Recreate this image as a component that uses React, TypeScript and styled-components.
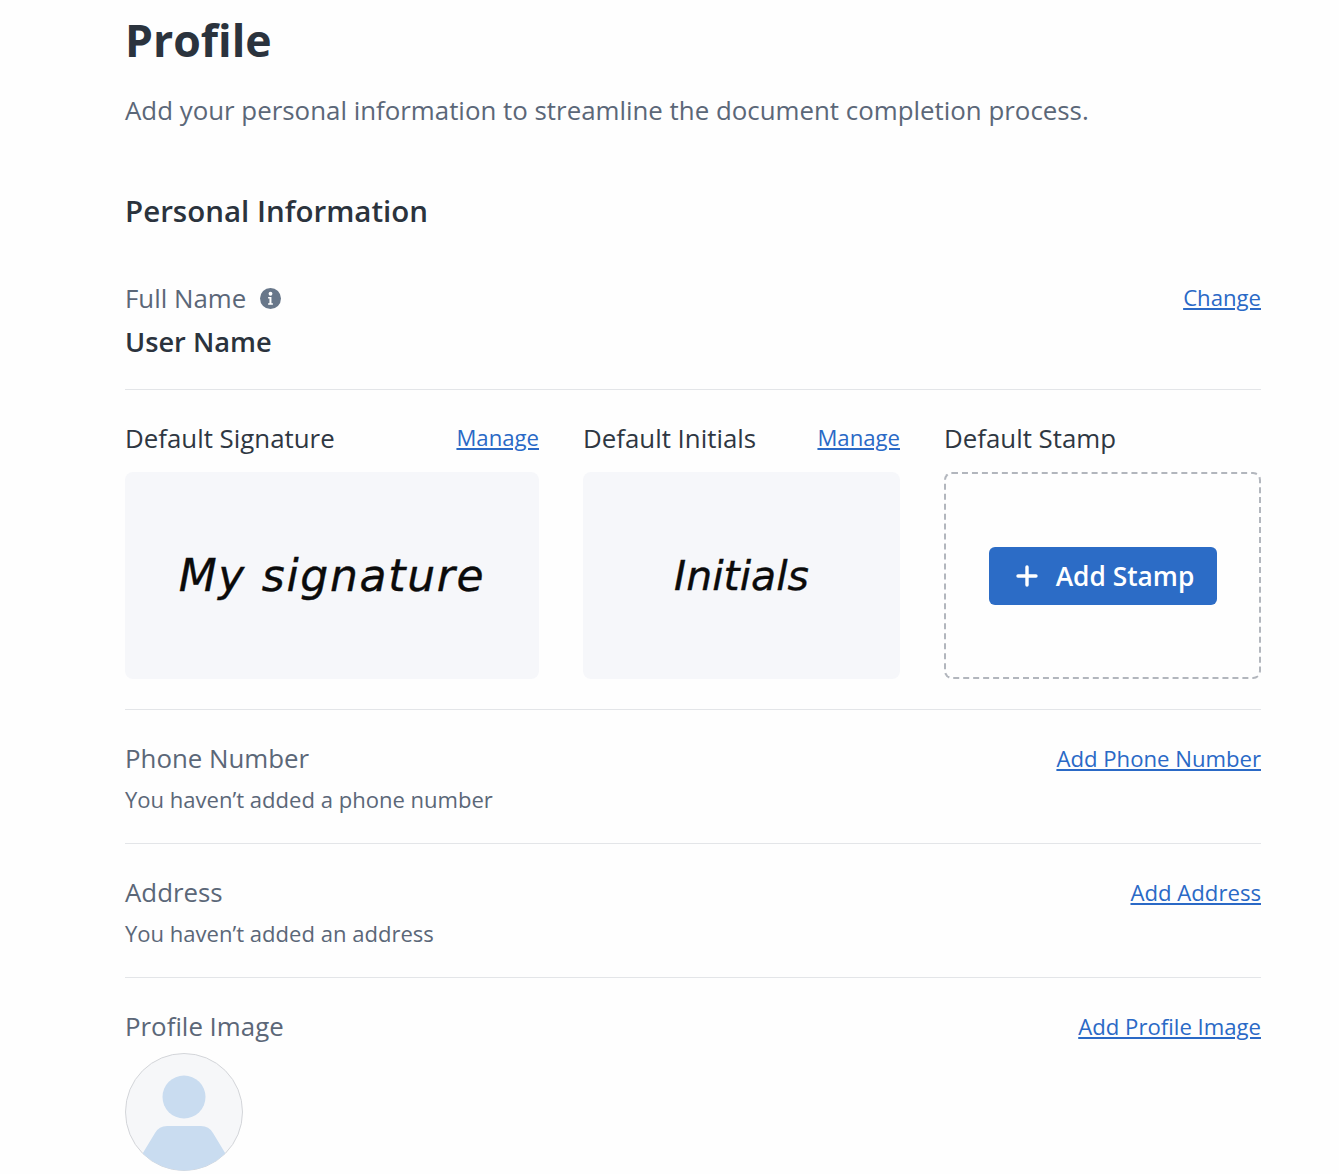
import React from "react";
import styled, { createGlobalStyle } from "styled-components";

const Global = createGlobalStyle`
  html, body { margin: 0; padding: 0; background: #fefefe; }
  body { font-family: "Open Sans", "Noto Sans", sans-serif; height: 1174px; overflow: hidden; }
`;
const Page = styled.main`
  width: 1136px;
  margin-left: 125px;
  padding-top: 12px;
  display: flex;
  flex-direction: column;
`;
const Title = styled.h1`
  margin: 0;
  font-size: 44.6px;
  line-height: 56px;
  font-weight: 700;
  color: #2b333d;
`;
const Subtitle = styled.p`
  margin: 24px 0 0;
  font-size: 25.87px;
  line-height: 36px;
  color: #5b6778;
`;
const SectionTitle = styled.h2`
  margin: 63px 0 0;
  font-size: 29.5px;
  line-height: 40px;
  font-weight: 600;
  color: #2b333d;
`;
const Row = styled.section<{ $height?: number; $pad?: number; $last?: boolean }>`
  display: flex;
  justify-content: space-between;
  align-items: flex-start;
  box-sizing: border-box;
  height: ${(p) => (p.$height ? `${p.$height}px` : "auto")};
  padding-top: ${(p) => p.$pad ?? 0}px;
  border-bottom: ${(p) => (p.$last ? "0" : "1px solid #e3e5e8")};
`;
const NameRow = styled(Row)`
  margin-top: 49px;
`;
const Label = styled.div`
  display: flex;
  align-items: center;
  gap: 14px;
  font-size: 25.85px;
  line-height: 36px;
  color: #5b6778;
`;
const Value = styled.div`
  margin-top: 8px;
  font-size: 27.2px;
  line-height: 36px;
  font-weight: 600;
  color: #2b333d;
`;
const Note = styled.div`
  margin-top: 7px;
  font-size: 22.05px;
  line-height: 32px;
  color: #5b6778;
`;
const TextLink = styled.a`
  font-size: 22.15px;
  line-height: 36px;
  color: #2a69c6;
  text-decoration: underline;
`;
const RaisedLink = styled(TextLink)`
  line-height: 34px;
`;
const Grid = styled.section`
  display: grid;
  grid-template-columns: 414px 317px 317px;
  justify-content: space-between;
  padding: 30px 0;
  border-bottom: 1px solid #e3e5e8;
`;
const Col = styled.div`
  display: flex;
  flex-direction: column;
  gap: 16px;
`;
const ColHead = styled.div`
  display: flex;
  justify-content: space-between;
  align-items: flex-start;
  height: 36px;
  font-size: 25.85px;
  line-height: 36px;
  color: #2f3742;
`;
const SigBox = styled.div`
  height: 207px;
  border-radius: 8px;
  background: #f6f7fa;
  display: flex;
  align-items: center;
  justify-content: center;
`;
const Signature = styled.span<{ $size: number; $spacing: number }>`
  font-family: "DejaVu Sans", sans-serif;
  font-style: oblique;
  font-size: ${(p) => p.$size}px;
  letter-spacing: ${(p) => p.$spacing}px;
  -webkit-text-stroke: 0.4px #0b0b0b;
  color: #0b0b0b;
`;
const StampBox = styled.div`
  height: 207px;
  box-sizing: border-box;
  border: 2px dashed #b2b6bd;
  border-radius: 8px;
  display: flex;
  align-items: center;
  justify-content: center;
`;
const AddButton = styled.button`
  width: 228px;
  height: 58px;
  padding: 0 0 0 4px;
  border: 0;
  border-radius: 6px;
  background: #2c6cc6;
  color: #fff;
  font-family: inherit;
  font-size: 26.3px;
  font-weight: 600;
  display: flex;
  align-items: center;
  justify-content: center;
  gap: 17px;
`;
const Avatar = styled.svg`
  display: block;
  width: 118px;
  height: 118px;
  margin-top: 9px;
`;

export default function App() {
  return (
    <>
      <Global />
      <Page>
        <Title>Profile</Title>
        <Subtitle>Add your personal information to streamline the document completion process.</Subtitle>
        <SectionTitle>Personal Information</SectionTitle>
        <NameRow $height={110}>
          <div>
            <Label>
              Full Name
              <svg width="21" height="21" viewBox="0 0 22 22">
                <circle cx="11" cy="11" r="11" fill="#68778a" />
                <circle cx="11" cy="6" r="2" fill="#fff" />
                <path d="M8.5 9.5h3.5v6.5h1.5v1.5h-5v-1.5h1.4v-5H8.5z" fill="#fff" />
              </svg>
            </Label>
            <Value>User Name</Value>
          </div>
          <RaisedLink>Change</RaisedLink>
        </NameRow>
        <Grid>
          <Col>
            <ColHead>Default Signature <RaisedLink>Manage</RaisedLink></ColHead>
            <SigBox><Signature $size={44} $spacing={1.7}>My signature</Signature></SigBox>
          </Col>
          <Col>
            <ColHead>Default Initials <RaisedLink>Manage</RaisedLink></ColHead>
            <SigBox><Signature $size={41} $spacing={0}>Initials</Signature></SigBox>
          </Col>
          <Col>
            <ColHead>Default Stamp</ColHead>
            <StampBox>
              <AddButton>
                <svg width="24" height="24" viewBox="0 0 24 24" fill="none" stroke="#fff" strokeWidth="3.4" strokeLinecap="round">
                  <path d="M12 3v18M3 12h18" />
                </svg>
                Add Stamp
              </AddButton>
            </StampBox>
          </Col>
        </Grid>
        <Row $height={134} $pad={30}>
          <div>
            <Label>Phone Number</Label>
            <Note>You haven’t added a phone number</Note>
          </div>
          <TextLink>Add Phone Number</TextLink>
        </Row>
        <Row $height={134} $pad={30}>
          <div>
            <Label>Address</Label>
            <Note>You haven’t added an address</Note>
          </div>
          <TextLink>Add Address</TextLink>
        </Row>
        <Row $pad={30} $last>
          <div>
            <Label>Profile Image</Label>
            <Avatar viewBox="0 0 118 118">
              <defs>
                <clipPath id="c"><circle cx="59" cy="59" r="58.5" /></clipPath>
              </defs>
              <circle cx="59" cy="59" r="58.5" fill="#f6f7f9" stroke="#d3d5d9" />
              <g clipPath="url(#c)" fill="#c9dcf0">
                <circle cx="59" cy="44" r="21.5" />
                <path d="M7 118L30 80Q34 73 42 73H76Q84 73 88 80L111 118z" />
              </g>
            </Avatar>
          </div>
          <TextLink>Add Profile Image</TextLink>
        </Row>
      </Page>
    </>
  );
}
